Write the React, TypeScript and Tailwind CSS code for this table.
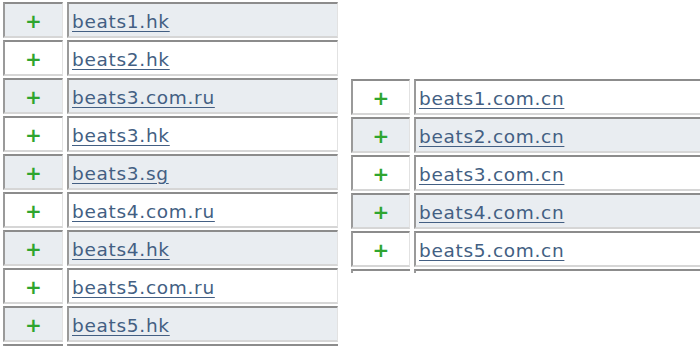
import React from "react";

const left = [
  "beats1.hk",
  "beats2.hk",
  "beats3.com.ru",
  "beats3.hk",
  "beats3.sg",
  "beats4.com.ru",
  "beats4.hk",
  "beats5.com.ru",
  "beats5.hk",
];
const right = [
  "beats1.com.cn",
  "beats2.com.cn",
  "beats3.com.cn",
  "beats4.com.cn",
  "beats5.com.cn",
];

function Row({ name, gray, w1, w2 }: { name: string; gray: boolean; w1: string; w2: string }) {
  const bg = gray ? "bg-[#e9edf1]" : "bg-white";
  const cell =
    "h-[36px] border-t-2 border-l-2 border-b-2 border-r border-t-[#8c8c8c] border-l-[#9a9a9a] border-b-[#d6d6d6] border-r-[#e2e2e2] flex items-center";
  return (
    <div className="flex gap-[4px]">
      <div className={`${cell} ${bg} ${w1} justify-center pt-[2px]`}>
        <span className="text-[#2fa52f] text-[20px] leading-none font-bold font-['DejaVu_Sans',sans-serif]">+</span>
      </div>
      <div className={`${cell} ${bg} ${w2} pl-[3px] pt-[3px]`}>
        <a className="text-[#435f83] underline text-[18.5px] tracking-[0.7px] font-['DejaVu_Sans',sans-serif] decoration-[1px] underline-offset-[3px]">
          {name}
        </a>
      </div>
    </div>
  );
}

function Stub({ w1, w2 }: { w1: string; w2: string }) {
  return (
    <div className="flex gap-[4px]">
      <div className={`h-[4px] border-t-2 border-l-2 border-t-[#8c8c8c] border-l-[#9a9a9a] ${w1}`} />
      <div className={`h-[4px] border-t-2 border-l-2 border-t-[#8c8c8c] border-l-[#9a9a9a] ${w2}`} />
    </div>
  );
}

export default function App() {
  return (
    <div className="w-[700px] h-[346px] overflow-hidden bg-white flex gap-[13px] pl-[3px]">
      <div className="flex flex-col gap-[2px] pt-[2px]">
        {left.map((n, i) => (
          <Row key={n} name={n} gray={i % 2 === 0} w1="w-[60px]" w2="w-[271px]" />
        ))}
        <Stub w1="w-[60px]" w2="w-[271px]" />
      </div>
      <div className="flex flex-col gap-[2px] pt-[79px]">
        {right.map((n, i) => (
          <Row key={n} name={n} gray={i % 2 === 1} w1="w-[59px]" w2="w-[300px]" />
        ))}
        <Stub w1="w-[59px]" w2="w-[300px]" />
      </div>
    </div>
  );
}
